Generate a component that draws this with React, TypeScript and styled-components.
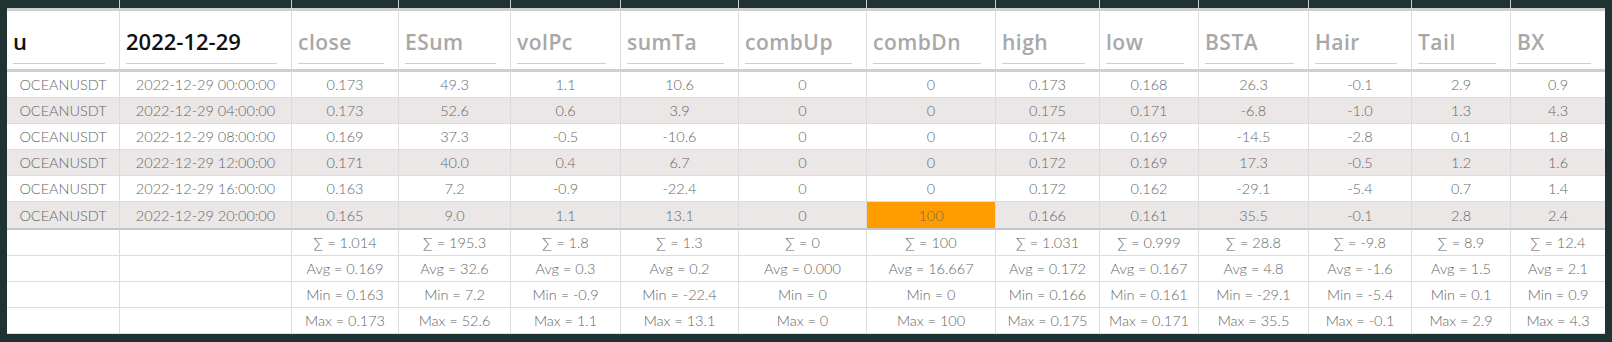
import React from 'react';
import styled, { createGlobalStyle, css } from 'styled-components';

const GlobalStyle = createGlobalStyle`
  html, body {
    margin: 0;
    padding: 0;
    background: #1f3333;
  }
  body {
    font-family: Lato, 'Noto Sans', sans-serif;
  }
`;

const widths = [113, 172, 107, 112, 110, 118, 128, 129, 104, 99, 110, 103, 99, 94];

const headers = ['u', '2022-12-29', 'close', 'ESum', 'volPc', 'sumTa', 'combUp', 'combDn', 'high', 'low', 'BSTA', 'Hair', 'Tail', 'BX'];

const rows: string[][] = [
  ['0.173', '49.3', '1.1', '10.6', '0', '0', '0.173', '0.168', '26.3', '-0.1', '2.9', '0.9'],
  ['0.173', '52.6', '0.6', '3.9', '0', '0', '0.175', '0.171', '-6.8', '-1.0', '1.3', '4.3'],
  ['0.169', '37.3', '-0.5', '-10.6', '0', '0', '0.174', '0.169', '-14.5', '-2.8', '0.1', '1.8'],
  ['0.171', '40.0', '0.4', '6.7', '0', '0', '0.172', '0.169', '17.3', '-0.5', '1.2', '1.6'],
  ['0.163', '7.2', '-0.9', '-22.4', '0', '0', '0.172', '0.162', '-29.1', '-5.4', '0.7', '1.4'],
  ['0.165', '9.0', '1.1', '13.1', '0', '100', '0.166', '0.161', '35.5', '-0.1', '2.8', '2.4'],
];

const times = ['00:00:00', '04:00:00', '08:00:00', '12:00:00', '16:00:00', '20:00:00'];

const summary: { label: string; values: string[] }[] = [
  { label: '\u2211', values: ['1.014', '195.3', '1.8', '1.3', '0', '100', '1.031', '0.999', '28.8', '-9.8', '8.9', '12.4'] },
  { label: 'Avg', values: ['0.169', '32.6', '0.3', '0.2', '0.000', '16.667', '0.172', '0.167', '4.8', '-1.6', '1.5', '2.1'] },
  { label: 'Min', values: ['0.163', '7.2', '-0.9', '-22.4', '0', '0', '0.166', '0.161', '-29.1', '-5.4', '0.1', '0.9'] },
  { label: 'Max', values: ['0.173', '52.6', '1.1', '13.1', '0', '100', '0.175', '0.171', '35.5', '-0.1', '2.9', '4.3'] },
];

const Frame = styled.div`
  padding: 0 7px 7px 7px;
`;

const Sheet = styled.div`
  display: grid;
  grid-template-columns: ${widths.map((w) => `${w}px`).join(' ')};
  width: ${widths.reduce((a, b) => a + b, 0)}px;
`;

const BandCell = styled.div<{ $last?: boolean }>`
  height: 8px;
  box-sizing: border-box;
  border-right: ${(p) => (p.$last ? 'none' : '1px solid #c8cccc')};
`;

const HeadCell = styled.div<{ $last?: boolean }>`
  box-sizing: border-box;
  height: 64px;
  background: #fff;
  border-top: 3px solid #cfcfcf;
  border-bottom: 3px solid #cfcfcf;
  border-right: ${(p) => (p.$last ? 'none' : '1px solid #ddd')};
  display: flex;
  align-items: flex-end;
  padding: 0 14px 5px 6px;
`;

const FilterInput = styled.input`
  width: 100%;
  height: 42px;
  box-sizing: border-box;
  border: none;
  border-bottom: 1px solid #cfcfcf;
  background: transparent;
  padding: 0 0 4px 0;
  margin: 0;
  outline: none;
  font-family: 'Open Sans', 'Noto Sans', sans-serif;
  font-size: 22px;
  font-weight: 600;
  color: #111;
  &::placeholder {
    font-size: 21px;
    font-weight: 600;
    letter-spacing: 0.5px;
    color: #a8a8a8;
  }
`;

const Cell = styled.div<{ $alt?: boolean; $hot?: boolean; $last?: boolean; $endRow?: boolean }>`
  box-sizing: border-box;
  height: ${(p) => (p.$endRow ? 28 : 26)}px;
  display: flex;
  align-items: center;
  justify-content: center;
  font-size: 14.5px;
  font-weight: 300;
  color: #666;
  white-space: nowrap;
  background: #fff;
  border-right: ${(p) => (p.$last ? 'none' : '1px solid #dcdcdc')};
  border-bottom: ${(p) => (p.$endRow ? '2px solid #c4c4c4' : '1px solid #dcdcdc')};
  ${(p) =>
    p.$alt &&
    css`
      background: #eae7e6;
    `}
  ${(p) =>
    p.$hot &&
    css`
      background: #ff9c00;
      color: #7a6a52;
    `}
`;

const App: React.FC = () => {
  const lastCol = widths.length - 1;
  return (
    <>
      <GlobalStyle />
      <Frame>
        <Sheet>
          {headers.map((h, i) => (
            <BandCell key={`b${i}`} $last={i === lastCol} />
          ))}
          {headers.map((h, i) => (
            <HeadCell key={`h${i}`} $last={i === lastCol}>
              {i < 2 ? <FilterInput defaultValue={h} /> : <FilterInput placeholder={h} />}
            </HeadCell>
          ))}
          {rows.map((r, ri) => {
            const alt = ri % 2 === 1;
            const endRow = ri === rows.length - 1;
            const cells = ['OCEANUSDT', `2022-12-29 ${times[ri]}`, ...r];
            return cells.map((v, ci) => (
              <Cell
                key={`r${ri}c${ci}`}
                $alt={alt}
                $endRow={endRow}
                $last={ci === lastCol}
                $hot={ci === 7 && v === '100'}
              >
                {v}
              </Cell>
            ));
          })}
          {summary.map((s, si) =>
            ['', '', ...s.values].map((v, ci) => (
              <Cell key={`s${si}c${ci}`} $last={ci === lastCol}>
                {v === '' ? '' : `${s.label} = ${v}`}
              </Cell>
            ))
          )}
        </Sheet>
      </Frame>
    </>
  );
};

export default App;
